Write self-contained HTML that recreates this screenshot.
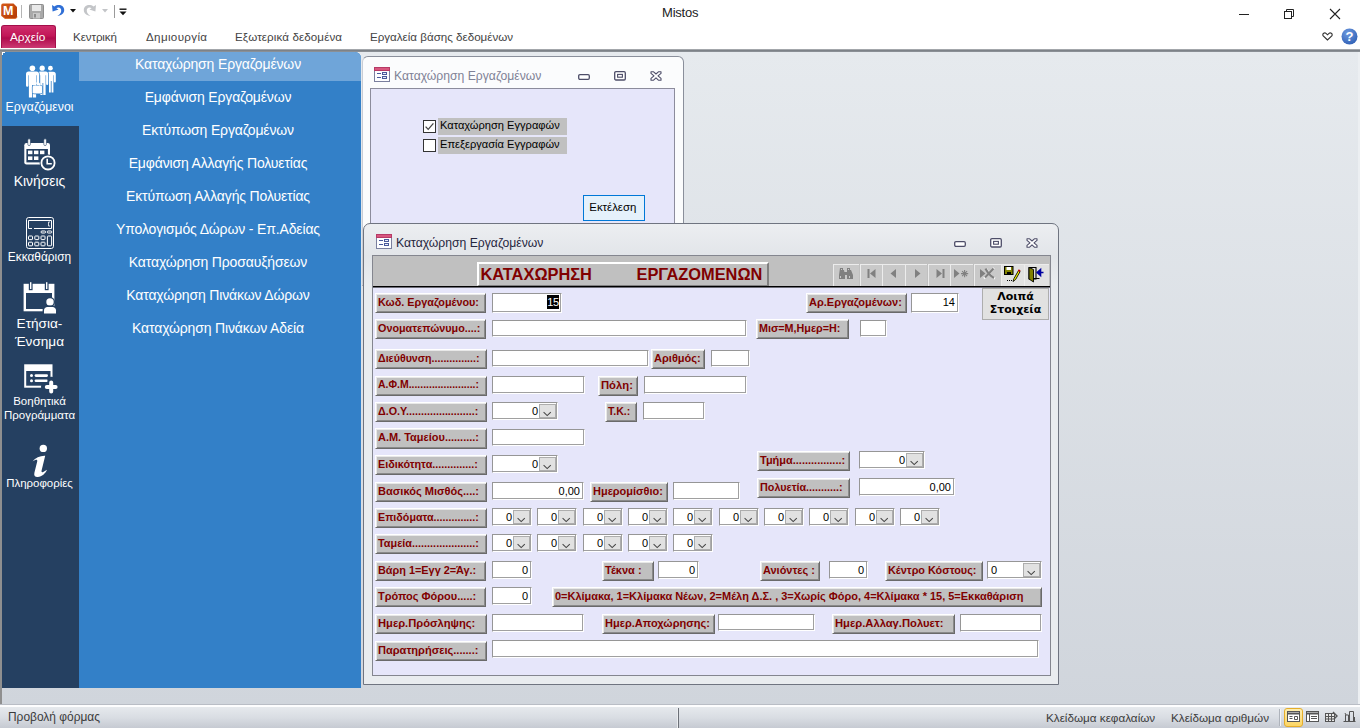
<!DOCTYPE html><html lang="el"><head><meta charset="utf-8"><title>Mistos</title><style>
*{box-sizing:border-box;margin:0;padding:0}
html,body{width:1360px;height:728px;overflow:hidden;background:#fff}
body{position:relative;font-family:"Liberation Sans","DejaVu Sans",sans-serif;font-size:12px;color:#000}
.a{position:absolute}
.t{position:absolute;white-space:nowrap;line-height:1}
.tab{position:absolute;top:30px;font-size:11.6px;color:#444;white-space:nowrap;line-height:13px}
.mi{position:absolute;left:77px;width:282px;height:29px;text-align:center;color:#fff;font-size:14px;letter-spacing:-0.15px;line-height:29px;white-space:nowrap}
.sl{position:absolute;left:1px;width:77px;text-align:center;color:#fff;white-space:nowrap}
.lb{position:absolute;background:#c0c0c0;color:#800000;font-weight:bold;font-size:11px;line-height:12px;white-space:nowrap;padding:2px 0 0 2px;border-top:1px solid #fff;border-left:1px solid #fff;border-right:1px solid #6a6a6a;border-bottom:1px solid #6a6a6a;box-shadow:inset 1px 1px 0 #e8e8e8,inset -1px -1px 0 #8a8a8a}
.tb{position:absolute;background:#fff;border-top:1px solid #969696;border-left:1px solid #969696;border-right:1px solid #fff;border-bottom:1px solid #fff;box-shadow:inset -1px -1px 0 #a0a0a0;font-size:11px;line-height:12px;text-align:right;white-space:nowrap;color:#000}
.tb span{position:absolute;right:3px;top:2px}
.dd{position:absolute;right:1px;top:1px;bottom:1px;width:17px;background:#e1e1e1;border:1px solid #adadad}
.dd svg{position:absolute;left:3px;top:6px}
.nb{position:absolute;top:264px;height:22px;background:#c9c9c9;border-left:1px solid #ececec;border-top:1px solid #ececec}
.nb svg{position:absolute;left:0;top:-1px}
</style></head><body>
<div class="a" style="left:0;top:0;width:1360px;height:49px;background:#fff"></div>
<svg class="a" style="left:0;top:2px" width="18" height="18" viewBox="0 0 18 18"><defs><linearGradient id="ag" x1="0" y1="0" x2="1" y2="1"><stop offset="0" stop-color="#d65a1a"/><stop offset="1" stop-color="#b23a06"/></linearGradient></defs><path d="M3 1.500H13.500L17 5V14.500Q17 16.500 15 16.500H5L1.200 13.500V3.500Q1.200 1.500 3 1.500Z" fill="url(#ag)"/><path d="M1.200 13.500L5 16.500H15Q17 16.500 17 14.500" fill="none" stroke="#d9661f" stroke-width="0.800"/><text x="8.200" y="13.200" font-family="Liberation Sans" font-weight="bold" font-size="12.500" fill="#fff" text-anchor="middle">M</text></svg>
<div class="a" style="left:21px;top:5px;width:1px;height:13px;background:#b5b5b5"></div>
<svg class="a" style="left:29px;top:4px" width="15" height="15" viewBox="0 0 15 15"><rect x="0.5" y="0.5" width="14" height="14" rx="1" fill="#a9a9a9" stroke="#8d8d8d"/><rect x="3" y="1" width="9" height="6" fill="#e9e9e9"/><rect x="4" y="9" width="7" height="5.5" fill="#c9c9c9"/><rect x="5" y="10" width="2" height="3.5" fill="#8d8d8d"/></svg>
<svg class="a" style="left:51px;top:3px" width="15" height="15" viewBox="0 0 15 15"><path d="M1 2 L1.6 8.4 L7.6 6.6 L5.4 5.2 C7.5 3.6 10.6 4.6 10.2 8 C10 10.2 8.6 11.8 6.4 13 C10.5 12.6 13.2 10.4 13.2 7 C13.2 2.6 7.6 0.4 3.4 3.6 Z" fill="#2f6fd6"/></svg>
<svg class="a" style="left:70px;top:9px" width="6" height="4" viewBox="0 0 6 4"><path d="M0 0H6L3 3.5Z" fill="#111"/></svg>
<svg class="a" style="left:82px;top:3px" width="15" height="15" viewBox="0 0 15 15"><path d="M14 2 L13.4 8.4 L7.4 6.6 L9.6 5.2 C7.5 3.6 4.4 4.6 4.8 8 C5 10.2 6.4 11.8 8.6 13 C4.5 12.6 1.8 10.4 1.8 7 C1.8 2.6 7.4 0.4 11.6 3.6 Z" fill="#c3c5c8"/></svg>
<svg class="a" style="left:102px;top:9px" width="6" height="4" viewBox="0 0 6 4"><path d="M0 0H6L3 3.5Z" fill="#c3c5c8"/></svg>
<div class="a" style="left:114px;top:5px;width:1px;height:13px;background:#9a9a9a"></div>
<svg class="a" style="left:119px;top:8px" width="8" height="8" viewBox="0 0 8 8"><rect x="0.5" y="0.5" width="7" height="1.4" fill="#111"/><path d="M0.5 3.4H7.5L4 7.2Z" fill="#111"/></svg>
<div class="t" style="left:662px;top:6px;font-size:13px;color:#222;letter-spacing:-0.2px">Mistos</div>
<div class="a" style="left:1239px;top:14px;width:10px;height:1px;background:#222"></div>
<svg class="a" style="left:1283px;top:8px" width="12" height="12" viewBox="0 0 12 12" fill="none" stroke="#222" stroke-width="1"><rect x="1.5" y="3.5" width="7" height="7"/><path d="M3.5 3.5V1.5H10.5V8.5H8.5"/></svg>
<svg class="a" style="left:1329px;top:8px" width="12" height="12" viewBox="0 0 12 12" fill="none" stroke="#222" stroke-width="1.1"><path d="M1 1L11 11M11 1L1 11"/></svg>
<svg class="a" style="left:1322px;top:32px" width="11" height="9" viewBox="0 0 11 9" fill="none" stroke="#333" stroke-width="1.1"><path d="M5.5 8 L1 3.6 C0.2 1.6 2.6 0.2 4 1.4 L5.5 2.8 L7 1.4 C8.4 0.2 10.8 1.6 10 3.6 Z"/></svg>
<svg class="a" style="left:1341px;top:28px" width="17" height="17" viewBox="0 0 17 17"><defs><radialGradient id="hg" cx="0.4" cy="0.3" r="0.8"><stop offset="0" stop-color="#6f9be0"/><stop offset="1" stop-color="#2b5cb3"/></radialGradient></defs><circle cx="8.5" cy="8.5" r="8" fill="url(#hg)"/><text x="8.5" y="13" font-family="Liberation Sans" font-weight="bold" font-size="13" fill="#fff" text-anchor="middle">?</text></svg>
<div class="a" style="left:1px;top:25px;width:55px;height:23px;border-radius:3px 3px 0 0;border:1px solid #a30f4a;border-bottom:none;background:linear-gradient(#cf2e6c 0%,#c21658 45%,#b00b4c 55%,#cc3a73 100%)"></div>
<div class="t" style="left:10px;top:31px;font-size:11.8px;color:#fff;line-height:13px">Αρχείο</div>
<div class="tab" style="left:73px;letter-spacing:-0.1px">Κεντρική</div>
<div class="tab" style="left:146px;letter-spacing:0.35px">Δημιουργία</div>
<div class="tab" style="left:235px;letter-spacing:0.11px">Εξωτερικά δεδομένα</div>
<div class="tab" style="left:370px;letter-spacing:0px">Εργαλεία βάσης δεδομένων</div>
<div class="a" style="left:0;top:49px;width:1360px;height:3px;background:linear-gradient(#b9bcc0,#7d8288 45%,#7d8288 75%,#a5a9ae)"></div>
<div class="a" style="left:0;top:52px;width:1360px;height:653px;background:linear-gradient(#e6eaee,#d0d5dc)"></div>
<div class="a" style="left:1358px;top:52px;width:2px;height:653px;background:#eceff2"></div>
<div class="a" style="left:0;top:52px;width:2px;height:653px;background:#8f8f8f"></div>
<div class="a" style="left:2px;top:52px;width:359px;height:636px;background:#3380c8;border-radius:0 6px 0 0"></div>
<div class="a" style="left:2px;top:126px;width:77px;height:562px;background:#254061"></div>
<div class="a" style="left:79px;top:52px;width:282px;height:29px;background:#6fa5d9;border-radius:0 6px 0 0"></div>
<div class="a" style="left:2px;top:52px;width:3px;height:1px;background:#fff"></div><div class="a" style="left:2px;top:52px;width:1px;height:3px;background:#fff"></div>
<div class="mi" style="top:50.3px">Καταχώρηση Εργαζομένων</div>
<div class="mi" style="top:83.2px">Εμφάνιση Εργαζομένων</div>
<div class="mi" style="top:116.1px">Εκτύπωση Εργαζομένων</div>
<div class="mi" style="top:149.0px">Εμφάνιση Αλλαγής Πολυετίας</div>
<div class="mi" style="top:181.9px">Εκτύπωση Αλλαγής Πολυετίας</div>
<div class="mi" style="top:214.8px">Υπολογισμός Δώρων - Επ.Αδείας</div>
<div class="mi" style="top:247.7px">Καταχώρηση Προσαυξήσεων</div>
<div class="mi" style="top:280.6px">Καταχώρηση Πινάκων Δώρων</div>
<div class="mi" style="top:313.5px">Καταχώρηση Πινάκων Αδεία</div>
<svg class="a" style="left:24px;top:64px" width="34" height="36" viewBox="24 64 34 36" fill="#fff"><g stroke="#3380c8" stroke-width="1.400" stroke-linejoin="round" style="paint-order:stroke"><circle cx="50.4" cy="68.2" r="2.4"/><path d="M46.6 81.6V74.3a2.600 2.600 0 0 1 2.600-2.600H53.199999999999996a2.600 2.600 0 0 1 2.600 2.600V81.6a0.95 0.95 0 0 1 -1.9 0V75.3h-0.500V92.6H51.60V81h-0.800V92.6H49.0V75.3h-0.500V81.6a0.95 0.95 0 0 1 -1.9 0z"/></g><g stroke="#3380c8" stroke-width="1.400" stroke-linejoin="round" style="paint-order:stroke"><circle cx="42.2" cy="68.2" r="2.6"/><path d="M37.6 84V74.19999999999999a2.600 2.600 0 0 1 2.600-2.600H45.6a2.600 2.600 0 0 1 2.600 2.600V84a1.05 1.05 0 0 1 -2.1 0V75.19999999999999h-0.500V95.1H43.30V83h-0.800V95.1H40.2V75.19999999999999h-0.500V84a1.05 1.05 0 0 1 -2.1 0z"/></g><g stroke="#3380c8" stroke-width="1.400" stroke-linejoin="round" style="paint-order:stroke"><circle cx="32.4" cy="68.3" r="2.8"/><path d="M26 85.5V74.19999999999999a2.600 2.600 0 0 1 2.600-2.600H36.4a2.600 2.600 0 0 1 2.600 2.600V85.5a1.2 1.2 0 0 1 -2.4 0V75.19999999999999h-0.500V97.6H32.90V85h-0.800V97.6H28.9V75.19999999999999h-0.500V85.5a1.2 1.2 0 0 1 -2.4 0z"/></g><rect x="32.600" y="85.600" width="9.500" height="7.900" rx="1.300" stroke="#3380c8" stroke-width="1.400" style="paint-order:stroke"/><path d="M35.300 85.400v-1.300c0-.6.400-1 1-1h2.200c.6 0 1 .4 1 1v1.300" fill="none" stroke="#fff" stroke-width="1.100"/></svg>
<div class="sl" style="top:99.5px;font-size:12.25px;line-height:15px">Εργαζόμενοι</div>
<svg class="a" style="left:22px;top:137px" width="36" height="36" viewBox="22 137 36 36">
<rect x="24.300" y="143" width="25.700" height="21.400" rx="2.200" fill="#fff"/>
<rect x="26.400" y="149" width="21.500" height="13.400" fill="#254061"/>
<rect x="27.800" y="138.800" width="2.600" height="6.800" rx="1.300" fill="#fff" stroke="#254061" stroke-width="0.600"/><rect x="43.800" y="138.800" width="2.600" height="6.800" rx="1.300" fill="#fff" stroke="#254061" stroke-width="0.600"/>
<g fill="#fff"><rect x="28" y="150.600" width="4.400" height="3.600"/><rect x="34" y="150.600" width="4.400" height="3.600"/><rect x="40" y="150.600" width="4.400" height="3.600"/><rect x="28" y="156.400" width="4.400" height="3.600"/><rect x="34" y="156.400" width="4.400" height="3.600"/></g>
<circle cx="48" cy="162.900" r="8.400" fill="#254061"/><circle cx="48" cy="162.900" r="6.600" fill="none" stroke="#fff" stroke-width="1.800"/>
<path d="M47.200 158.800v4.900h4.600" fill="none" stroke="#fff" stroke-width="1.600"/>
</svg>
<div class="sl" style="top:172.7px;font-size:13.9px;line-height:17px">Κινήσεις</div>
<svg class="a" style="left:24px;top:215px" width="32" height="36" viewBox="24 215 32 36" fill="none" stroke="#fff" stroke-width="1">
<rect x="26.500" y="217.500" width="27" height="31" rx="2.200"/>
<path d="M32 228.500h-3.500v-8h23v8h-17.500"/><path d="M50 222h-1.500v4h1.500" stroke-width="0.800"/>
<rect x="41" y="231" width="4.600" height="2" rx="1"/><rect x="47.200" y="231" width="4.600" height="2" rx="1"/>
<rect x="28.500" y="236" width="4" height="3.600" rx=".6"/><rect x="34.800" y="236" width="4" height="3.600" rx=".6"/><rect x="41" y="236" width="4" height="3.600" rx=".6"/>
<rect x="28.500" y="242.200" width="4" height="3.600" rx=".6"/><rect x="34.800" y="242.200" width="4" height="3.600" rx=".6"/><rect x="41" y="242.200" width="4" height="3.600" rx=".6"/>
<rect x="47.400" y="236" width="4.200" height="9.800" rx=".8"/>
</svg>
<div class="sl" style="top:250px;font-size:11.9px;line-height:15px">Εκκαθάριση</div>
<svg class="a" style="left:22px;top:280px" width="36" height="36" viewBox="22 280 36 36">
<rect x="23.600" y="283.800" width="30.800" height="27.500" fill="#fff"/>
<rect x="26" y="293" width="26" height="16" fill="#254061"/>
<rect x="29.400" y="281.600" width="2.600" height="8" fill="#fff" stroke="#254061" stroke-width="1.200"/><rect x="45.400" y="281.600" width="2.600" height="8" fill="#fff" stroke="#254061" stroke-width="1.200"/>
<circle cx="50" cy="302" r="5" fill="#254061"/><circle cx="50" cy="302" r="3.700" fill="#fff"/>
<path d="M42.600 315v-4.600c0-3 2.400-4.800 4.600-4.800h5.600c2.200 0 4.600 1.800 4.600 4.800v4.600z" fill="#254061"/>
<path d="M44 313.500v-3.200c0-2 1.600-3.400 3.400-3.400h5.200c1.800 0 3.400 1.400 3.400 3.400v3.200z" fill="#fff"/>
</svg>
<div class="sl" style="top:315px;font-size:13.6px;line-height:17.6px">Ετήσια-<br>Ένσημα</div>
<svg class="a" style="left:22px;top:362px" width="38" height="34" viewBox="22 362 38 34">
<rect x="24.200" y="364.300" width="28.300" height="23.400" fill="#fff"/>
<rect x="26.200" y="371" width="24.300" height="14.700" fill="#254061"/>
<g fill="#fff"><circle cx="31.500" cy="375.600" r="1.500"/><circle cx="31.500" cy="380.800" r="1.500"/><rect x="34.600" y="374.300" width="13.400" height="2.600" rx="1.300"/><rect x="34.600" y="379.500" width="13.400" height="2.600" rx="1.300"/></g>
<path d="M51.200 380.500v13M44.700 387h13" stroke="#254061" stroke-width="7.400" stroke-linecap="round"/>
<path d="M51.200 382.600v8.800M46.800 387h8.800" stroke="#fff" stroke-width="4" stroke-linecap="round"/>
</svg>
<div class="sl" style="top:394px;font-size:11.5px;line-height:14px">Βοηθητικά<br>Προγράμματα</div>
<svg class="a" style="left:30px;top:443px" width="22" height="36" viewBox="30 443 22 36" fill="#fff">
<circle cx="43.300" cy="448.400" r="3.700"/>
<path d="M32.600 461.200c3-3.400 7.400-5.600 12.600-5.400l-3.600 14.800c-.4 1.600.4 2 1.600 1.400l3.800-2.200c-1.600 3.800-5 6.800-9.200 7.200-2.600.2-4.200-1.200-3.400-4.200l2.800-11.400c.4-1.600-.6-2-2-1.400z"/>
</svg>
<div class="sl" style="top:476px;font-size:11.45px;line-height:15px">Πληροφορίες</div>
<div class="a" style="left:0;top:704px;width:1360px;height:1px;background:#b9bdc5"></div>
<div class="a" style="left:0;top:705px;width:1360px;height:2px;background:#fdfdfe"></div>
<div class="a" style="left:0;top:707px;width:1360px;height:21px;background:linear-gradient(#e6e9ed 0,#d9dde3 50%,#c6cad2 100%)"></div>
<div class="t" style="left:8px;top:711px;font-size:11.95px;color:#3b3b3b;line-height:13px">Προβολή φόρμας</div>
<div class="a" style="left:677px;top:708px;width:1px;height:20px;background:#eceef1"></div><div class="a" style="left:678px;top:708px;width:1px;height:20px;background:#6c7078"></div>
<div class="t" style="left:1046px;top:711px;font-size:11.7px;color:#3b3b3b;line-height:13px">Κλείδωμα κεφαλαίων</div>
<div class="t" style="left:1171px;top:711px;font-size:11.7px;color:#3b3b3b;line-height:13px">Κλείδωμα αριθμών</div>
<div class="a" style="left:1279px;top:709px;width:1px;height:17px;background:#aeb3bb"></div><div class="a" style="left:1280px;top:709px;width:1px;height:17px;background:#f4f5f7"></div>
<div class="a" style="left:1284px;top:708px;width:19px;height:19px;border:1px solid #e5ad2a;border-radius:3px;background:linear-gradient(#fdeeb0,#fcd564)"></div>
<svg class="a" style="left:1287px;top:711px" width="13" height="12" viewBox="0 0 13 12" fill="none" stroke="#555" stroke-width="1"><rect x="0.500" y="0.500" width="12" height="10" fill="#fff"/><path d="M0.500 2.500h12" stroke-width="2"/><path d="M2.500 5.500h3M2.500 7.500h3M7.500 5.500h3v3h-3z"/></svg>
<svg class="a" style="left:1306px;top:711px" width="13" height="12" viewBox="0 0 13 12" fill="none" stroke="#555" stroke-width="1"><rect x="0.500" y="0.500" width="12" height="10" fill="#fff"/><path d="M0.500 2.500h12" stroke-width="2"/><path d="M3.500 3v8M5 5.500h6M5 7.500h6"/></svg>
<svg class="a" style="left:1325px;top:711px" width="13" height="12" viewBox="0 0 13 12" fill="none" stroke="#555" stroke-width="1"><rect x="0.500" y="2.500" width="9" height="8" fill="#e8e8e8"/><path d="M0.500 5.500h9M0.500 8h9M3.500 2.500v8M6.500 2.500v8"/><path d="M8 1l4 4-3 3" stroke-width="1.400"/></svg>
<svg class="a" style="left:1343px;top:711px" width="13" height="12" viewBox="0 0 13 12" fill="none" stroke="#555" stroke-width="1"><path d="M0.500 10.500h12M2.500 10v-6h3v6M6.500 10v-9.500h4v9.500M11.500 6v4" /><path d="M3 4l-1-2" /></svg>
<div class="a" style="left:362px;top:56px;width:322px;height:230px;background:#fbfcfd;border:1px solid #8a8f9b;border-left-color:#c9cdd5;border-radius:6px 6px 0 0"></div>
<svg class="a" style="left:374px;top:67px" width="16" height="15" viewBox="0 0 16 15"><rect x="0.500" y="0.500" width="15" height="14" fill="#fdfdff" stroke="#7a7f9e"/><rect x="0.500" y="0.500" width="15" height="3" fill="#d8567e" stroke="#b63a66"/><path d="M3 6.500h4M3 10.500h4" stroke="#4a5a9a" stroke-width="1"/><rect x="8.500" y="5.500" width="4" height="2" fill="#e8ecfa" stroke="#4a5a9a"/><rect x="8.500" y="9.500" width="4" height="2" fill="#e8ecfa" stroke="#4a5a9a"/></svg>
<div class="t" style="left:394px;top:69px;font-size:12.2px;color:#7f8296;line-height:14px">Καταχώρηση Εργαζομένων</div>
<svg class="a" style="left:578px;top:74px" width="12" height="7" viewBox="0 0 12 7"><rect x="0.700" y="0.700" width="10.600" height="4.600" rx="1.200" fill="#fff" stroke="#4d4d68" stroke-width="1.300"/></svg><svg class="a" style="left:614px;top:71px" width="12" height="10" viewBox="0 0 12 10"><rect x="0.700" y="0.700" width="10.600" height="8.300" rx="1.200" fill="#fff" stroke="#4d4d68" stroke-width="1.300"/><rect x="3.600" y="3.400" width="4.800" height="2.800" fill="#fff" stroke="#4d4d68" stroke-width="1.100"/></svg><svg class="a" style="left:650px;top:71px" width="12" height="10" viewBox="0 0 12 10"><path d="M1 0.800h2.600L6 3l2.400-2.200H11v1.600L8 4.900l3 2.500v1.800H8.400L6 6.900 3.600 9.200H1V7.400l3-2.500-3-2.500z" fill="#fff" stroke="#4d4d68" stroke-width="1.100" stroke-linejoin="round"/></svg>
<div class="a" style="left:370px;top:88px;width:305px;height:190px;background:#e6e6fa;border:1px solid #8c8c9c"></div>
<div class="a" style="left:438px;top:118px;width:129px;height:17px;background:#c0c0c0"></div>
<div class="a" style="left:423px;top:120px;width:13px;height:13px;background:#fff;border:1px solid #333"></div>
<svg class="a" style="left:423px;top:120px" width="13" height="13" viewBox="0 0 13 13"><path d="M2.600 6.600l2.600 2.800 5.200-6" fill="none" stroke="#444" stroke-width="1.300"/></svg>
<div class="t" style="left:440px;top:118.7px;font-size:11.1px;line-height:13px;color:#000">Καταχώρηση Εγγραφών</div>
<div class="a" style="left:438px;top:137px;width:129px;height:17px;background:#c0c0c0"></div>
<div class="a" style="left:423px;top:139px;width:13px;height:13px;background:#fff;border:1px solid #333"></div>
<div class="t" style="left:440px;top:137.7px;font-size:11.1px;line-height:13px;color:#000">Επεξεργασία Εγγραφών</div>
<div class="a" style="left:583px;top:195px;width:62px;height:26px;background:#e5f1fb;border:1px solid #0078d7"></div>
<div class="t" style="left:589.3px;top:201.2px;font-size:11.4px;line-height:13px;color:#000">Εκτέλεση</div>
<div class="a" style="left:363px;top:223px;width:696px;height:462px;background:linear-gradient(#eceef1 0,#e2e5e9 32px,#e9ecef 60px,#e9ecef 100%);border:1px solid #6f7480;border-radius:7px 7px 0 0"></div>
<svg class="a" style="left:376px;top:234px" width="16" height="15" viewBox="0 0 16 15"><rect x="0.500" y="0.500" width="15" height="14" fill="#fdfdff" stroke="#7a7f9e"/><rect x="0.500" y="0.500" width="15" height="3" fill="#d8567e" stroke="#b63a66"/><path d="M3 6.500h4M3 10.500h4" stroke="#4a5a9a" stroke-width="1"/><rect x="8.500" y="5.500" width="4" height="2" fill="#e8ecfa" stroke="#4a5a9a"/><rect x="8.500" y="9.500" width="4" height="2" fill="#e8ecfa" stroke="#4a5a9a"/></svg>
<div class="t" style="left:396px;top:236px;font-size:12.2px;color:#26263e;line-height:14px">Καταχώρηση Εργαζομένων</div>
<svg class="a" style="left:954px;top:241px" width="12" height="7" viewBox="0 0 12 7"><rect x="0.700" y="0.700" width="10.600" height="4.600" rx="1.200" fill="#fff" stroke="#4d4d68" stroke-width="1.300"/></svg><svg class="a" style="left:990px;top:238px" width="12" height="10" viewBox="0 0 12 10"><rect x="0.700" y="0.700" width="10.600" height="8.300" rx="1.200" fill="#fff" stroke="#4d4d68" stroke-width="1.300"/><rect x="3.600" y="3.400" width="4.800" height="2.800" fill="#fff" stroke="#4d4d68" stroke-width="1.100"/></svg><svg class="a" style="left:1026px;top:238px" width="12" height="10" viewBox="0 0 12 10"><path d="M1 0.800h2.600L6 3l2.400-2.200H11v1.600L8 4.900l3 2.500v1.800H8.400L6 6.900 3.600 9.200H1V7.400l3-2.500-3-2.500z" fill="#fff" stroke="#4d4d68" stroke-width="1.100" stroke-linejoin="round"/></svg>
<div class="a" style="left:372px;top:255px;width:679px;height:421px;background:#e6e6fa;border:1px solid #84868f"></div>
<div class="a" style="left:373px;top:256px;width:677px;height:30px;background:#c0c0c0"></div>
<div class="a" style="left:373px;top:286px;width:677px;height:1px;background:#000"></div><div class="a" style="left:373px;top:287px;width:677px;height:1px;background:#6e6e78"></div>
<div class="a" style="left:477px;top:262px;width:292px;height:24px;background:#c0c0c0;border-top:2px solid #fff;border-left:2px solid #fff;border-right:2px solid #808080;border-bottom:1px solid #808080"></div>
<div class="t" style="left:480.500px;top:265px;font-size:16.400px;font-weight:bold;color:#800000;line-height:19px;white-space:pre">ΚΑΤΑΧΩΡΗΣΗ</div>
<div class="t" style="left:636.500px;top:265px;font-size:16.400px;font-weight:bold;color:#800000;line-height:19px;white-space:pre">ΕΡΓΑΖΟΜΕΝΩΝ</div>
<div class="nb" style="left:833px;width:26px;background:#c9c9c9"><svg width="26" height="21" viewBox="0 0 26 21"><g fill="#808080"><path d="M6 4h3v2h1l1 5v4H5v-4zM13 4h3v2h1l2 5v4h-6v-4z"/><rect x="10" y="8" width="3" height="3"/></g><g fill="#c9c9c9"><rect x="7" y="5" width="1" height="1"/><rect x="14" y="5" width="1" height="1"/><rect x="6" y="12" width="1" height="2"/><rect x="15" y="12" width="1" height="2"/></g></svg></div>
<div class="nb" style="left:860px;width:22px;background:#c9c9c9"><svg width="22" height="21" viewBox="0 0 22 21"><path d="M6.500 5h2v9h-2zM14.500 5v9l-5.500-4.500z" fill="#808080"/></svg></div>
<div class="nb" style="left:882px;width:23px;background:#c9c9c9"><svg width="23" height="21" viewBox="0 0 23 21"><path d="M13 5v9l-5.500-4.500z" fill="#808080"/></svg></div>
<div class="nb" style="left:905px;width:22px;background:#c9c9c9"><svg width="22" height="21" viewBox="0 0 22 21"><path d="M9 5v9l5.500-4.500z" fill="#808080"/></svg></div>
<div class="nb" style="left:928px;width:22px;background:#c9c9c9"><svg width="22" height="21" viewBox="0 0 22 21"><path d="M7.500 5v9l5.500-4.500zM13.500 5h2v9h-2z" fill="#808080"/></svg></div>
<div class="nb" style="left:950px;width:23px;background:#c9c9c9"><svg width="23" height="21" viewBox="0 0 23 21"><path d="M3 5v9l5.500-4.500z" fill="#808080"/><path d="M13.600 6v7.200M10 9.600h7.200M11.100 7.100l5 5M16.100 7.100l-5 5" stroke="#808080" stroke-width="1.100" fill="none"/></svg></div>
<div class="nb" style="left:974px;width:27px;background:#c9c9c9"><svg width="27" height="21" viewBox="0 0 27 21"><path d="M5 5v9l5.500-4.500z" fill="#808080"/><path d="M9 14.500L19 4M11 4.500c2 4 5 8 9 10" stroke="#f8f8f8" stroke-width="2.200" fill="none"/><path d="M10 13.500L18.500 4.500M10.500 4.500c2 4 5 7.500 8.500 9.500" stroke="#808080" stroke-width="2.200" fill="none"/></svg></div>
<div class="nb" style="left:1001px;width:23px;background:#e1e1e1"><svg width="23" height="21" viewBox="0 0 23 21"><rect x="2.500" y="2.500" width="8.500" height="8" fill="#808000" stroke="#000" stroke-width="1"/><rect x="4.500" y="3" width="4.500" height="3" fill="#fff"/><rect x="5" y="8" width="4" height="2.500" fill="#000"/><path d="M16.500 6.500l-4.500 8-1 3 2.600-2 4.500-8z" fill="#ffff00" stroke="#000" stroke-width="0.900"/><path d="M16.300 6l1.800 1.200" stroke="#c00000" stroke-width="1.800"/><path d="M5 16.500h1M7 16.500h1M9 16.500h1" stroke="#000"/></svg></div>
<div class="nb" style="left:1024px;width:25px;background:#e1e1e1"><svg width="25" height="21" viewBox="0 0 25 21"><path d="M4 3.500h7v11.500H4z" fill="#e1e1e1" stroke="#000" stroke-width="1.100"/><path d="M4 3.500l4.500 2v12.500l-4.500-3z" fill="#808000" stroke="#000" stroke-width="0.900"/><path d="M8.500 14.500h6" stroke="#000" stroke-width="1"/><path d="M18.500 8.500h-4M15.500 5.500l-3.300 3 3.300 3z" fill="#0000a0" stroke="#0000a0" stroke-width="1.600"/></svg></div>
<div class="a" style="left:982px;top:288px;width:67px;height:32px;background:#e1e1e1;border:1px solid #adadad"></div>
<div class="a" style="left:982px;top:290px;width:67px;text-align:center;font-family:'DejaVu Sans','Liberation Sans',sans-serif;font-weight:bold;font-size:11px;line-height:13.200px;color:#000">Λοιπά<br>Στοιχεία</div>
<div class="lb" style="left:375px;top:293px;width:111px;height:20px;font-size:10.83px">Κωδ. Εργαζομένου:</div>
<div class="tb" style="left:492px;top:293px;width:70px;height:20px"><span style="right:2px;top:1px;background:#000;color:#fff;padding:1px 0 1px 0;height:14px;letter-spacing:-0.2px">15</span></div>
<div class="lb" style="left:806px;top:293px;width:101px;height:20px;font-size:11.01px">Αρ.Εργαζομένων:</div>
<div class="tb" style="left:911px;top:293px;width:48px;height:20px"><span>14</span></div>
<div class="lb" style="left:375px;top:319px;width:111px;height:20px;font-size:10.81px">Ονοματεπώνυμο....:</div>
<div class="tb" style="left:492px;top:320px;width:255px;height:17px"></div>
<div class="lb" style="left:756px;top:319px;width:93px;height:20px;font-size:10.78px">Μισ=Μ,Ημερ=Η:</div>
<div class="tb" style="left:860px;top:320px;width:27px;height:17px"></div>
<div class="lb" style="left:375px;top:349px;width:112px;height:20px;font-size:10.66px">Διεύθυνση...............:</div>
<div class="tb" style="left:492px;top:350px;width:157px;height:17px"></div>
<div class="lb" style="left:651px;top:349px;width:54px;height:20px;font-size:11.05px">Αριθμός:</div>
<div class="tb" style="left:711px;top:350px;width:39px;height:17px"></div>
<div class="lb" style="left:375px;top:376px;width:112px;height:20px;font-size:10.46px">Α.Φ.Μ.......................:</div>
<div class="tb" style="left:492px;top:376px;width:93px;height:18px"></div>
<div class="lb" style="left:598px;top:376px;width:40px;height:20px;font-size:11.26px">Πόλη:</div>
<div class="tb" style="left:644px;top:376px;width:103px;height:18px"></div>
<div class="lb" style="left:375px;top:402px;width:112px;height:20px;font-size:10.75px">Δ.Ο.Υ.......................:</div>
<div class="tb" style="left:492px;top:402px;width:66px;height:18px"><span style="right:19px">0</span><div class="dd"><svg width="9" height="6" viewBox="0 0 9 6"><path d="M0.600 1.200l3.600 3.400 3.600-3.400" fill="none" stroke="#444" stroke-width="1.050"/></svg></div></div>
<div class="lb" style="left:605px;top:402px;width:32px;height:20px;font-size:10.56px">Τ.Κ.:</div>
<div class="tb" style="left:643px;top:402px;width:62px;height:18px"></div>
<div class="lb" style="left:375px;top:428px;width:112px;height:21px;font-size:10.97px">Α.Μ. Ταμείου..........:</div>
<div class="tb" style="left:492px;top:429px;width:93px;height:17px"></div>
<div class="lb" style="left:375px;top:455px;width:112px;height:20px;font-size:10.81px">Ειδικότητα..............:</div>
<div class="tb" style="left:492px;top:455px;width:66px;height:18px"><span style="right:19px">0</span><div class="dd"><svg width="9" height="6" viewBox="0 0 9 6"><path d="M0.600 1.200l3.600 3.400 3.600-3.400" fill="none" stroke="#444" stroke-width="1.050"/></svg></div></div>
<div class="lb" style="left:757px;top:451px;width:93px;height:20px;font-size:10.97px">Τμήμα................:</div>
<div class="tb" style="left:859px;top:451px;width:66px;height:18px"><span style="right:19px">0</span><div class="dd"><svg width="9" height="6" viewBox="0 0 9 6"><path d="M0.600 1.200l3.600 3.400 3.600-3.400" fill="none" stroke="#444" stroke-width="1.050"/></svg></div></div>
<div class="lb" style="left:375px;top:482px;width:112px;height:20px;font-size:11.05px">Βασικός Μισθός....:</div>
<div class="tb" style="left:492px;top:482px;width:92px;height:18px"><span>0,00</span></div>
<div class="lb" style="left:590px;top:482px;width:78px;height:20px;font-size:10.98px">Ημερομίσθιο:</div>
<div class="tb" style="left:673px;top:482px;width:67px;height:18px"></div>
<div class="lb" style="left:757px;top:478px;width:93px;height:20px;font-size:10.8px">Πολυετία...........:</div>
<div class="tb" style="left:859px;top:478px;width:96px;height:18px"><span>0,00</span></div>
<div class="lb" style="left:375px;top:508px;width:112px;height:20px;font-size:10.73px">Επιδόματα..............:</div>
<div class="tb" style="left:492px;top:508px;width:40px;height:18px"><span style="right:19px">0</span><div class="dd"><svg width="9" height="6" viewBox="0 0 9 6"><path d="M0.600 1.200l3.600 3.400 3.600-3.400" fill="none" stroke="#444" stroke-width="1.050"/></svg></div></div>
<div class="tb" style="left:537px;top:508px;width:40px;height:18px"><span style="right:19px">0</span><div class="dd"><svg width="9" height="6" viewBox="0 0 9 6"><path d="M0.600 1.200l3.600 3.400 3.600-3.400" fill="none" stroke="#444" stroke-width="1.050"/></svg></div></div>
<div class="tb" style="left:583px;top:508px;width:40px;height:18px"><span style="right:19px">0</span><div class="dd"><svg width="9" height="6" viewBox="0 0 9 6"><path d="M0.600 1.200l3.600 3.400 3.600-3.400" fill="none" stroke="#444" stroke-width="1.050"/></svg></div></div>
<div class="tb" style="left:628px;top:508px;width:40px;height:18px"><span style="right:19px">0</span><div class="dd"><svg width="9" height="6" viewBox="0 0 9 6"><path d="M0.600 1.200l3.600 3.400 3.600-3.400" fill="none" stroke="#444" stroke-width="1.050"/></svg></div></div>
<div class="tb" style="left:673px;top:508px;width:40px;height:18px"><span style="right:19px">0</span><div class="dd"><svg width="9" height="6" viewBox="0 0 9 6"><path d="M0.600 1.200l3.600 3.400 3.600-3.400" fill="none" stroke="#444" stroke-width="1.050"/></svg></div></div>
<div class="tb" style="left:719px;top:508px;width:40px;height:18px"><span style="right:19px">0</span><div class="dd"><svg width="9" height="6" viewBox="0 0 9 6"><path d="M0.600 1.200l3.600 3.400 3.600-3.400" fill="none" stroke="#444" stroke-width="1.050"/></svg></div></div>
<div class="tb" style="left:764px;top:508px;width:40px;height:18px"><span style="right:19px">0</span><div class="dd"><svg width="9" height="6" viewBox="0 0 9 6"><path d="M0.600 1.200l3.600 3.400 3.600-3.400" fill="none" stroke="#444" stroke-width="1.050"/></svg></div></div>
<div class="tb" style="left:809px;top:508px;width:40px;height:18px"><span style="right:19px">0</span><div class="dd"><svg width="9" height="6" viewBox="0 0 9 6"><path d="M0.600 1.200l3.600 3.400 3.600-3.400" fill="none" stroke="#444" stroke-width="1.050"/></svg></div></div>
<div class="tb" style="left:855px;top:508px;width:40px;height:18px"><span style="right:19px">0</span><div class="dd"><svg width="9" height="6" viewBox="0 0 9 6"><path d="M0.600 1.200l3.600 3.400 3.600-3.400" fill="none" stroke="#444" stroke-width="1.050"/></svg></div></div>
<div class="tb" style="left:900px;top:508px;width:40px;height:18px"><span style="right:19px">0</span><div class="dd"><svg width="9" height="6" viewBox="0 0 9 6"><path d="M0.600 1.200l3.600 3.400 3.600-3.400" fill="none" stroke="#444" stroke-width="1.050"/></svg></div></div>
<div class="lb" style="left:375px;top:534px;width:112px;height:20px;font-size:10.86px">Ταμεία.....................:</div>
<div class="tb" style="left:492px;top:534px;width:40px;height:18px"><span style="right:19px">0</span><div class="dd"><svg width="9" height="6" viewBox="0 0 9 6"><path d="M0.600 1.200l3.600 3.400 3.600-3.400" fill="none" stroke="#444" stroke-width="1.050"/></svg></div></div>
<div class="tb" style="left:537px;top:534px;width:40px;height:18px"><span style="right:19px">0</span><div class="dd"><svg width="9" height="6" viewBox="0 0 9 6"><path d="M0.600 1.200l3.600 3.400 3.600-3.400" fill="none" stroke="#444" stroke-width="1.050"/></svg></div></div>
<div class="tb" style="left:583px;top:534px;width:40px;height:18px"><span style="right:19px">0</span><div class="dd"><svg width="9" height="6" viewBox="0 0 9 6"><path d="M0.600 1.200l3.600 3.400 3.600-3.400" fill="none" stroke="#444" stroke-width="1.050"/></svg></div></div>
<div class="tb" style="left:628px;top:534px;width:40px;height:18px"><span style="right:19px">0</span><div class="dd"><svg width="9" height="6" viewBox="0 0 9 6"><path d="M0.600 1.200l3.600 3.400 3.600-3.400" fill="none" stroke="#444" stroke-width="1.050"/></svg></div></div>
<div class="tb" style="left:673px;top:534px;width:40px;height:18px"><span style="right:19px">0</span><div class="dd"><svg width="9" height="6" viewBox="0 0 9 6"><path d="M0.600 1.200l3.600 3.400 3.600-3.400" fill="none" stroke="#444" stroke-width="1.050"/></svg></div></div>
<div class="lb" style="left:375px;top:561px;width:111px;height:20px;font-size:10.88px">Βάρη 1=Εγγ 2=Άγ.:</div>
<div class="tb" style="left:492px;top:561px;width:40px;height:18px"><span>0</span></div>
<div class="lb" style="left:602px;top:561px;width:52px;height:20px;font-size:11.0px">Τέκνα :</div>
<div class="tb" style="left:658px;top:561px;width:41px;height:18px"><span>0</span></div>
<div class="lb" style="left:760px;top:561px;width:60px;height:20px;font-size:10.97px">Ανιόντες :</div>
<div class="tb" style="left:829px;top:561px;width:39px;height:18px"><span>0</span></div>
<div class="lb" style="left:885px;top:561px;width:98px;height:20px;font-size:10.86px">Κέντρο Κόστους:</div>
<div class="tb" style="left:987px;top:561px;width:55px;height:18px"><span style="right:auto;left:3px">0</span><div class="dd"><svg width="9" height="6" viewBox="0 0 9 6"><path d="M0.600 1.200l3.600 3.400 3.600-3.400" fill="none" stroke="#444" stroke-width="1.050"/></svg></div></div>
<div class="lb" style="left:375px;top:587px;width:111px;height:20px;font-size:11.01px">Τρόπος Φόρου.....:</div>
<div class="tb" style="left:492px;top:587px;width:40px;height:18px"><span>0</span></div>
<div class="lb" style="left:552px;top:587px;width:490px;height:20px;font-size:10.98px">0=Κλίμακα, 1=Κλίμακα Νέων, 2=Μέλη Δ.Σ. , 3=Χωρίς Φόρο, 4=Κλίμακα * 15, 5=Εκκαθάριση</div>
<div class="lb" style="left:375px;top:614px;width:112px;height:20px;font-size:11.16px">Ημερ.Πρόσληψης:</div>
<div class="tb" style="left:492px;top:614px;width:92px;height:18px"></div>
<div class="lb" style="left:602px;top:614px;width:113px;height:20px;font-size:11.03px">Ημερ.Αποχώρησης:</div>
<div class="tb" style="left:718px;top:614px;width:97px;height:17px"></div>
<div class="lb" style="left:832px;top:614px;width:123px;height:20px;font-size:11.21px">Ημερ.Αλλαγ.Πολυετ:</div>
<div class="tb" style="left:960px;top:614px;width:82px;height:18px"></div>
<div class="lb" style="left:375px;top:641px;width:112px;height:20px;font-size:11.05px">Παρατηρήσεις.......:</div>
<div class="tb" style="left:492px;top:640px;width:547px;height:18px"></div>
</body></html>
